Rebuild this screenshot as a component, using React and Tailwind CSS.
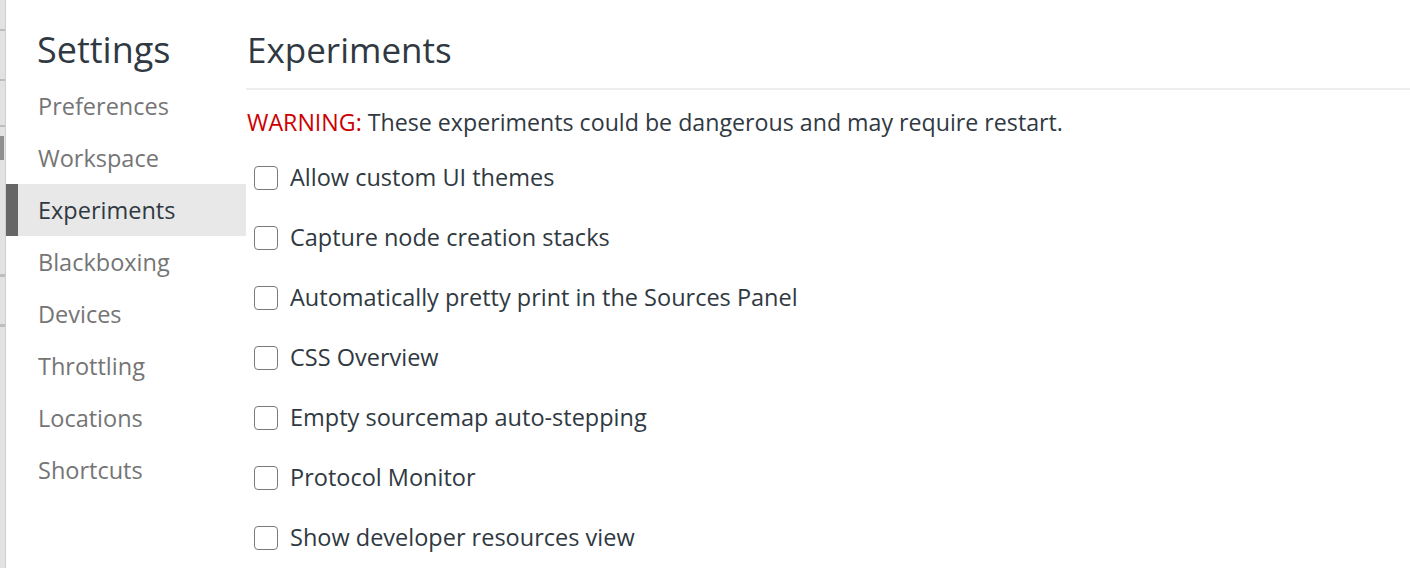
import React from "react";

const F = { fontFamily: '"Open Sans", "Noto Sans", sans-serif' };

const navItems = ["Preferences", "Workspace", "Experiments", "Blackboxing", "Devices", "Throttling", "Locations", "Shortcuts"];
const experiments = [
  "Allow custom UI themes",
  "Capture node creation stacks",
  "Automatically pretty print in the Sources Panel",
  "CSS Overview",
  "Empty sourcemap auto-stepping",
  "Protocol Monitor",
  "Show developer resources view",
];

export default function App() {
  return (
    <div className="flex h-[568px] w-full overflow-hidden bg-white" style={F}>
      {/* left edge strip */}
      <div className="relative w-[6px] shrink-0 bg-[#e2e2e2] border-r border-[#cfcfcf]">
        <div className="absolute left-0 top-[29px] h-[2px] w-full bg-[#bdbdbd]" />
        <div className="absolute left-0 top-[79px] h-[2px] w-full bg-[#bdbdbd]" />
        <div className="absolute left-0 top-[125px] h-[2px] w-full bg-[#bdbdbd]" />
        <div className="absolute left-0 top-[136px] h-[24px] w-[4px] bg-[#8f8f8f]" />
        <div className="absolute left-0 top-[274px] h-[3px] w-full bg-[#bdbdbd]" />
        <div className="absolute left-0 top-[324px] h-[3px] w-full bg-[#bdbdbd]" />
      </div>

      {/* sidebar */}
      <div className="flex w-[240px] shrink-0 flex-col">
        <div className="h-[80px] shrink-0 pl-[31px] pt-[27px] text-[36px] leading-[46px] text-[#303942]">Settings</div>
        {navItems.map((item) => {
          const sel = item === "Experiments";
          return (
            <div
              key={item}
              className={
                sel
                  ? "flex h-[52px] shrink-0 items-center border-l-[12px] border-[#666666] bg-[#e8e8e8] pl-[20px] pt-[1px] text-[23.5px] text-[#303942]"
                  : "flex h-[52px] shrink-0 items-center pl-[32px] pt-[1px] text-[23.5px] text-[#757575]"
              }
            >
              {item}
            </div>
          );
        })}
      </div>

      {/* main */}
      <div className="flex min-w-0 flex-1 flex-col">
        <div className="h-[90px] shrink-0 border-b-2 border-[#eeeeee] pl-[1px] pt-[27px] text-[35px] leading-[46px] text-[#303942]">
          Experiments
        </div>
        <div className="h-[58px] shrink-0 pl-[1px] pt-[16px] text-[23.2px] leading-[32px] text-[#303942]">
          <span className="text-[#cc0000]">WARNING:</span>
          <span className="ml-[6px]">These experiments could be dangerous and may require restart.</span>
        </div>
        <div className="flex shrink-0 flex-col">
          {experiments.map((e) => (
            <label key={e} className="flex h-[60px] shrink-0 items-center pl-[8px] text-[23.5px] text-[#303942]">
              <span className="h-[24px] w-[24px] shrink-0 rounded-[4px] border-[1.5px] border-[#7a7a7a] bg-white" />
              <span className="ml-[12px]">{e}</span>
            </label>
          ))}
        </div>
      </div>
    </div>
  );
}
